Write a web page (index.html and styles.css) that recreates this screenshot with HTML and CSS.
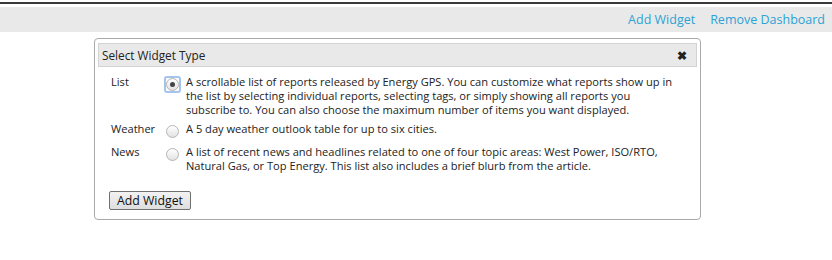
FILE: index.html
```html
<!DOCTYPE html>
<html>
<head>
<meta charset="utf-8">
<link rel="stylesheet" href="styles.css">
</head>
<body>
<div class="topline"></div>
<div class="toolbar">
  <a class="link" href="#">Add Widget</a>
  <a class="link" href="#">Remove Dashboard</a>
</div>
<div class="dialog">
  <div class="titlebar">
    <span class="title">Select Widget Type</span>
    <span class="close">&#10006;</span>
  </div>
  <div class="options">
    <div class="row">
      <div class="label">List</div>
      <div class="focus"><div class="radio"><span class="dot"></span></div></div>
      <div class="desc">A scrollable list of reports released by Energy GPS. You can customize what reports show up in the list by selecting individual reports, selecting tags, or simply showing all reports you subscribe to. You can also choose the maximum number of items you want displayed.</div>
    </div>
    <div class="row">
      <div class="label">Weather</div>
      <div class="nofocus"><div class="radio"></div></div>
      <div class="desc">A 5 day weather outlook table for up to six cities.</div>
    </div>
    <div class="row">
      <div class="label">News</div>
      <div class="nofocus"><div class="radio"></div></div>
      <div class="desc">A list of recent news and headlines related to one of four topic areas: West Power, ISO/RTO, Natural Gas, or Top Energy. This list also includes a brief blurb from the article.</div>
    </div>
  </div>
  <button class="btn">Add Widget</button>
</div>
</body>
</html>
```

FILE: styles.css
```css
* { box-sizing: border-box; }
body {
  margin: 0;
  background: #fff;
  font-family: "Open Sans", sans-serif;
  font-size: 11.1px;
  color: #222;
}
.topline {
  margin-top: 2px;
  height: 2px;
  background: #3a3a3a;
}
.toolbar {
  margin-top: 3px;
  height: 25px;
  background: #e9e9e9;
  display: flex;
  justify-content: flex-end;
  align-items: center;
  gap: 15px;
  padding-right: 7px;
}
.link {
  color: #2ba3d5;
  text-decoration: none;
  font-size: 12.5px;
}
.dialog {
  margin: 6px 0 0 94px;
  width: 607px;
  height: 182px;
  border: 1px solid #aaa;
  border-radius: 4px;
  padding: 4px 3px;
}
.titlebar {
  height: 24px;
  background: #e9e9e9;
  border: 1px solid #d3d3d3;
  display: flex;
  align-items: center;
  justify-content: space-between;
  padding: 0 9px 0 3px;
}
.title { font-size: 11.8px; color: #222; }
.close { font-size: 12px; color: #222; font-weight: bold; }
.options {
  padding: 8px 0 0 13px;
  display: flex;
  flex-direction: column;
  gap: 5px;
}
.row {
  display: flex;
  align-items: flex-start;
  line-height: 14px;
}
.label { width: 53px; }
.focus, .nofocus {
  flex: none;
  width: 17px;
  height: 17px;
  margin-top: 1px;
  margin-right: 5px;
  border: 2px solid transparent;
  border-radius: 3px;
  display: flex;
  align-items: center;
  justify-content: center;
}
.focus { border-color: #a4c4ee; }
.radio {
  width: 13px;
  height: 13px;
  border-radius: 50%;
  border: 1px solid #b5b5b5;
  background: linear-gradient(#fff, #e2e2e2);
  flex: none;
  display: flex;
  align-items: center;
  justify-content: center;
}
.dot {
  width: 5px; height: 5px; border-radius: 50%; background: #444;
}
.desc { width: 492px; }
.btn {
  margin: 18px 0 0 11px;
  font-family: "Open Sans", sans-serif;
  font-size: 12.3px;
  padding: 0 7px;
  height: 19px;
  border: 1px solid #707070;
  background: linear-gradient(#f2f2f2, #dedede);
  border-radius: 2px;
  color: #111;
}
```
